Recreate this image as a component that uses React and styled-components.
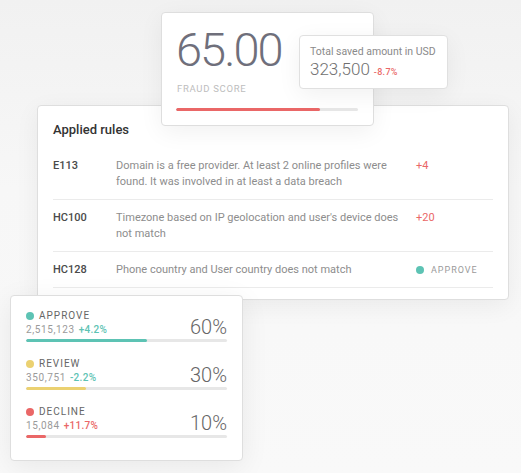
import React from "react";
import styled, { createGlobalStyle } from "styled-components";

const GlobalStyle = createGlobalStyle`
  html, body {
    margin: 0;
    padding: 0;
  }
  body {
    width: 521px;
    height: 473px;
    overflow: hidden;
    font-family: Roboto, "Liberation Sans", sans-serif;
    background: linear-gradient(180deg, #f1f1f1 0%, #f7f7f7 40%, #f9f9f9 100%);
  }
`;

const COLORS = {
  approve: "#5dc3b4",
  review: "#ebd171",
  decline: "#ea6767",
};

const Page = styled.div`
  width: 521px;
  height: 473px;
  padding-top: 12px;
  box-sizing: border-box;
  display: flex;
  flex-direction: column;
  align-items: flex-start;
`;

const Card = styled.div`
  background: #fff;
  border: 1px solid #dedede;
  border-radius: 4px;
  box-shadow: 0 6px 24px rgba(0, 0, 0, 0.06);
  box-sizing: border-box;
`;

const ScoreCard = styled(Card)`
  position: relative;
  z-index: 2;
  margin-left: 161px;
  width: 213px;
  height: 114px;
  padding: 13px 15px 0 14px;
`;

const Score = styled.div`
  font-size: 47px;
  font-weight: 300;
  line-height: 48px;
  color: #6f6f7b;
  letter-spacing: -2px;
`;

const Caption = styled.div`
  margin-top: 8px;
  padding-left: 1px;
  font-size: 9.5px;
  line-height: 14px;
  letter-spacing: 0.7px;
  color: #bdbdbd;
`;

const Track = styled.div`
  height: 3px;
  background: #e7e7e7;
  border-radius: 2px;
  margin-top: ${(p) => p.$gap || 0}px;
  overflow: hidden;
`;

const Fill = styled.div`
  height: 100%;
  background: ${(p) => p.$color};
  border-radius: 2px;
`;

const SavedCard = styled(Card)`
  position: absolute;
  left: 137px;
  top: 22px;
  width: 149px;
  height: 54px;
  padding: 9px 0 0 10px;
  border-color: #e0e0e0;
`;

const SavedLabel = styled.div`
  font-size: 10.5px;
  line-height: 14px;
  white-space: nowrap;
  color: #8a8a8a;
`;

const SavedValue = styled.div`
  display: flex;
  align-items: baseline;
  gap: 4px;
  font-size: 17px;
  font-weight: 300;
  line-height: 20px;
  color: #6f6f6f;
`;

const Delta = styled.span`
  font-size: ${(p) => p.$size || 10}px;
  font-weight: 500;
  letter-spacing: 0.3px;
  color: ${(p) => p.$color};
`;

const RulesCard = styled(Card)`
  position: relative;
  z-index: 1;
  margin-top: -21px;
  margin-left: 37px;
  width: 472px;
  height: 195px;
  padding: 16px 15px 0;
`;

const Title = styled.div`
  font-size: 13px;
  font-weight: 500;
  line-height: 16px;
  color: #333;
  margin-bottom: 10px;
`;

const Rule = styled.div`
  display: grid;
  grid-template-columns: 63px 300px 1fr;
  padding: 10px 0 9px;
  border-bottom: 1px solid #ebebeb;
  font-size: 11px;
  line-height: 16px;
`;

const Code = styled.div`
  font-weight: 500;
  color: #4a4a4a;
`;

const Desc = styled.div`
  color: #8d8d8d;
  padding-right: 14px;
`;

const Points = styled.div`
  color: #ea6767;
`;

const Badge = styled.div`
  display: flex;
  align-items: center;
  gap: 7px;
  font-size: 9px;
  letter-spacing: 1px;
  color: #9a9a9a;
`;

const Dot = styled.span`
  width: 8px;
  height: 8px;
  border-radius: 50%;
  background: ${(p) => p.$color};
  flex: none;
`;

const StatsCard = styled(Card)`
  position: relative;
  z-index: 3;
  margin-top: -5px;
  margin-left: 10px;
  width: 233px;
  height: 166px;
  padding: 13px 15px 0;
  display: flex;
  flex-direction: column;
  gap: 15px;
  box-shadow: 0 6px 28px rgba(0, 0, 0, 0.07);
`;

const Stat = styled.div``;

const StatTop = styled.div`
  display: flex;
  justify-content: space-between;
  align-items: flex-end;
`;

const StatLabel = styled.div`
  display: flex;
  align-items: center;
  gap: 5px;
  font-size: 10px;
  line-height: 14px;
  letter-spacing: 1px;
  color: #666;
`;

const StatNums = styled.div`
  display: flex;
  align-items: baseline;
  gap: 4px;
  font-size: 10px;
  line-height: 14px;
  letter-spacing: 0.6px;
  color: #9a9a9a;
`;

const Percent = styled.div`
  font-size: 20px;
  font-weight: 300;
  line-height: 20px;
  color: #666;
`;

const rules = [
  {
    code: "E113",
    desc: "Domain is a free provider. At least 2 online profiles were found. It was involved in at least a data breach",
    points: "+4",
  },
  {
    code: "HC100",
    desc: "Timezone based on IP geolocation and user's device does not match",
    points: "+20",
  },
  {
    code: "HC128",
    desc: "Phone country and User country does not match",
    approve: true,
  },
];

const stats = [
  { label: "APPROVE", color: COLORS.approve, count: "2,515,123", delta: "+4.2%", deltaColor: COLORS.approve, pct: 60 },
  { label: "REVIEW", color: COLORS.review, count: "350,751", delta: "-2.2%", deltaColor: COLORS.approve, pct: 30 },
  { label: "DECLINE", color: COLORS.decline, count: "15,084", delta: "+11.7%", deltaColor: COLORS.decline, pct: 10 },
];

export default function App() {
  return (
    <>
      <GlobalStyle />
      <Page>
        <ScoreCard>
          <Score>65.00</Score>
          <Caption>FRAUD SCORE</Caption>
          <Track $gap={12}>
            <Fill $color={COLORS.decline} style={{ width: "79%" }} />
          </Track>
          <SavedCard>
            <SavedLabel>Total saved amount in USD</SavedLabel>
            <SavedValue>
              323,500 <Delta $color={COLORS.decline} $size={9}>-8.7%</Delta>
            </SavedValue>
          </SavedCard>
        </ScoreCard>

        <RulesCard>
          <Title>Applied rules</Title>
          {rules.map((r) => (
            <Rule key={r.code}>
              <Code>{r.code}</Code>
              <Desc>{r.desc}</Desc>
              {r.approve ? (
                <Badge>
                  <Dot $color={COLORS.approve} />
                  APPROVE
                </Badge>
              ) : (
                <Points>{r.points}</Points>
              )}
            </Rule>
          ))}
        </RulesCard>

        <StatsCard>
          {stats.map((s) => (
            <Stat key={s.label}>
              <StatTop>
                <div>
                  <StatLabel>
                    <Dot $color={s.color} />
                    {s.label}
                  </StatLabel>
                  <StatNums>
                    {s.count}
                    <Delta $color={s.deltaColor}>{s.delta}</Delta>
                  </StatNums>
                </div>
                <Percent>{s.pct}%</Percent>
              </StatTop>
              <Track $gap={2}>
                <Fill $color={s.color} style={{ width: `${s.pct}%` }} />
              </Track>
            </Stat>
          ))}
        </StatsCard>
      </Page>
    </>
  );
}
